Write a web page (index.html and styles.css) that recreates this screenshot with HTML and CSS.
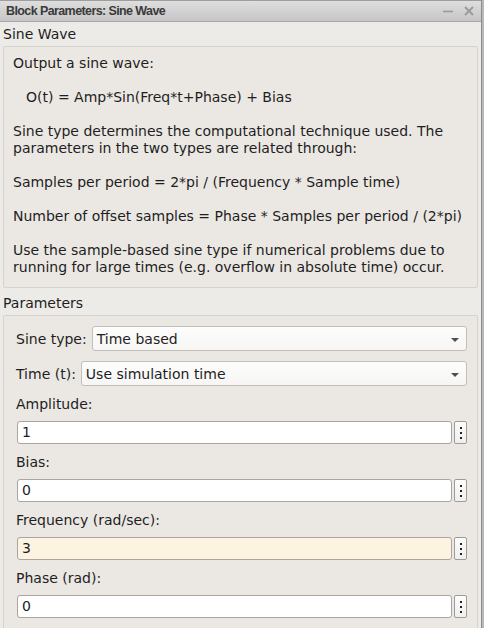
FILE: index.html
```html
<!DOCTYPE html>
<html>
<head>
<meta charset="utf-8">
<link rel="stylesheet" href="styles.css">
</head>
<body>
<div class="screen">
  <div class="window">
    <div class="titlebar">
      <span class="title">Block Parameters: Sine Wave</span>
      <span class="controls">
        <svg class="ctl" width="12" height="12" viewBox="0 0 12 12"><path d="M1 6.5h10" stroke="#9a9a9a" stroke-width="1.6"/></svg>
        <svg class="ctl" width="12" height="12" viewBox="0 0 12 12"><path d="M2 2l8 8M10 2l-8 8" stroke="#9a9a9a" stroke-width="1.8"/></svg>
      </span>
    </div>
    <div class="content">
      <div class="group-title first">Sine Wave</div>
      <div class="desc-box">
        <p>Output a sine wave:</p>
        <p class="indent">O(t) = Amp*Sin(Freq*t+Phase) + Bias</p>
        <p>Sine type determines the computational technique used. The parameters in the two types are related through:</p>
        <p>Samples per period = 2*pi / (Frequency * Sample time)</p>
        <p>Number of offset samples = Phase * Samples per period / (2*pi)</p>
        <p>Use the sample-based sine type if numerical problems due to running for large times (e.g. overflow in absolute time) occur.</p>
      </div>
      <div class="group-title">Parameters</div>
      <div class="param-box">
        <div class="row">
          <span class="row-label">Sine type:</span>
          <div class="select"><span>Time based</span><span class="arrow"></span></div>
        </div>
        <div class="row">
          <span class="row-label">Time (t):</span>
          <div class="select"><span>Use simulation time</span><span class="arrow"></span></div>
        </div>
        <div class="field">
          <div class="field-label">Amplitude:</div>
          <div class="input-row"><div class="input">1</div><div class="dots"><i></i><i></i><i></i></div></div>
        </div>
        <div class="field">
          <div class="field-label">Bias:</div>
          <div class="input-row"><div class="input">0</div><div class="dots"><i></i><i></i><i></i></div></div>
        </div>
        <div class="field">
          <div class="field-label">Frequency (rad/sec):</div>
          <div class="input-row"><div class="input edited">3</div><div class="dots"><i></i><i></i><i></i></div></div>
        </div>
        <div class="field">
          <div class="field-label">Phase (rad):</div>
          <div class="input-row"><div class="input">0</div><div class="dots"><i></i><i></i><i></i></div></div>
        </div>
      </div>
    </div>
  </div>
  <div class="edge"></div>
</div>
</body>
</html>
```

FILE: styles.css
```css
html, body {
  margin: 0;
  padding: 0;
  width: 484px;
  height: 628px;
  overflow: hidden;
  background: #edebe8;
}
.screen {
  display: flex;
  width: 484px;
  height: 628px;
}
.window {
  width: 482px;
  height: 628px;
  display: flex;
  flex-direction: column;
  background: #edebe8;
  font-family: "DejaVu Sans", sans-serif;
  font-size: 14px;
  color: #1e1e1e;
  overflow: hidden;
}
.edge {
  width: 2px;
  background: #b9b9b9;
  border-left: 1px solid #8c8c8c;
}
.titlebar {
  height: 22px;
  flex: none;
  box-sizing: border-box;
  display: flex;
  align-items: center;
  justify-content: space-between;
  padding: 0 6px 0 6px;
  background: linear-gradient(#dedede, #c6c6c6);
  border-top: 1px solid #9e9e9e;
  border-bottom: 1px solid #a8a8a8;
}
.title {
  font-family: "Liberation Sans", Arial, sans-serif;
  font-weight: bold;
  font-size: 12.5px;
  letter-spacing: -0.6px;
  color: #3a3a3a;
}
.controls {
  display: flex;
  gap: 9px;
  align-items: center;
}
.ctl { display: block; }
.content {
  padding: 0 3px 0 3px;
  display: flex;
  flex-direction: column;
}
.group-title {
  height: 24px;
  line-height: 24px;
  margin-top: 3px;
}
.group-title.first {
  margin-top: 0;
}
.desc-box {
  border: 1px solid #d6d2cd;
  border-radius: 2px;
  background: #ebe8e4;
  padding: 8px 9px 2px 9px;
  line-height: 17px;
}
.desc-box p {
  margin: 0 0 17px 0;
}
.desc-box p:last-child {
  margin-bottom: 9px;
}
.desc-box .indent {
  padding-left: 13px;
}
.param-box {
  border: 1px solid #d6d2cd;
  border-radius: 2px;
  background: #ebe8e4;
  padding: 10px 10px 0 11px;
  height: 400px;
}
.row {
  display: flex;
  align-items: center;
  gap: 5px;
  height: 25px;
  margin-bottom: 10px;
}
.row-label {
  padding-left: 1px;
  white-space: nowrap;
}
.select {
  flex: 1;
  height: 25px;
  box-sizing: border-box;
  border: 1px solid #c2beb8;
  border-radius: 3px;
  background: linear-gradient(#fdfdfd, #f7f6f5);
  display: flex;
  align-items: center;
  justify-content: space-between;
  padding: 0 7px 0 4px;
}
.arrow {
  width: 0;
  height: 0;
  border-left: 4px solid transparent;
  border-right: 4px solid transparent;
  border-top: 4px solid #4f4f4f;
  margin-top: 2px;
}
.field {
  display: flex;
  flex-direction: column;
}
.field-label {
  height: 17px;
  line-height: 17px;
  padding-left: 1px;
  margin-bottom: 8px;
}
.input-row {
  display: flex;
  gap: 2px;
  padding-left: 2px;
  height: 23px;
  margin-bottom: 10px;
}
.input {
  flex: 1;
  box-sizing: border-box;
  height: 23px;
  border: 1px solid #a9a6a2;
  border-radius: 3px;
  background: #ffffff;
  padding: 0 4px;
  line-height: 21px;
}
.input.edited {
  background: #fdf3e1;
}
.dots {
  width: 13px;
  box-sizing: border-box;
  height: 23px;
  border: 1px solid #9f9c98;
  border-radius: 2px;
  background: linear-gradient(#fcfcfc, #efefef);
  display: flex;
  flex-direction: column;
  align-items: center;
  justify-content: center;
  gap: 3px;
}
.dots i {
  display: block;
  width: 2px;
  height: 2px;
  background: #222;
}
```
